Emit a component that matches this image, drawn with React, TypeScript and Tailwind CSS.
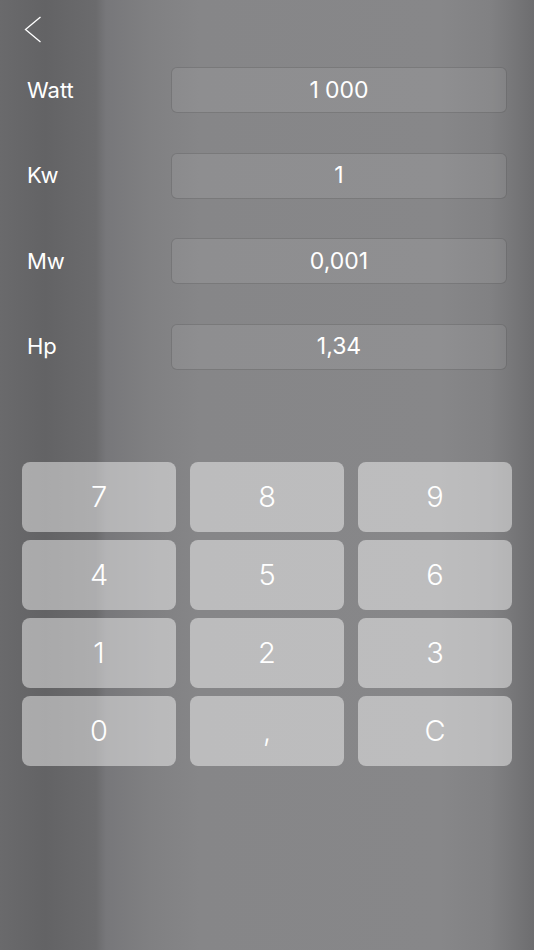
import React from 'react';

const ROWS: { label: string; value: React.ReactNode }[] = [
    { label: 'Watt', value: <>1<span className="ml-[6px]">000</span></> },
    { label: 'Kw', value: '1' },
    { label: 'Mw', value: '0,001' },
    { label: 'Hp', value: '1,34' },
];

const KEYS = ['7', '8', '9', '4', '5', '6', '1', '2', '3', '0', ',', 'C'];

const App: React.FC = () => {
    return (
        <div
            className="w-[534px] h-[950px] overflow-hidden text-white bg-[linear-gradient(90deg,#6a6a6c_0px,#636365_45px,#6b6b6d_96px,#77777a_106px,#808082_150px,#868688_200px,#878789_440px,#818183_490px,#767678_515px,#6d6d6f_534px)]"
            style={{ fontFamily: 'Inter, "Open Sans", sans-serif' }}
        >
            <div className="h-[67px] pl-[24px] pt-[16px]">
                <svg width="18" height="28" viewBox="0 0 18 28" fill="none">
                    <path d="M16.5 1 L1.5 13.5 L16.5 26" stroke="white" strokeWidth="1.3" />
                </svg>
            </div>

            <div className="flex flex-col gap-[39.5px] px-[27px]">
                {ROWS.map(r => (
                    <div key={r.label} className="flex items-center h-[46px]">
                        <div className="w-[144px] text-[22px]">{r.label}</div>
                        <div className="flex-1 h-[46px] flex items-center justify-center rounded-[6px] border border-black/15 bg-white/[0.07] text-[23px]">
                            {r.value}
                        </div>
                    </div>
                ))}
            </div>

            <div className="mt-[92px] px-[22px] grid grid-cols-3 gap-x-[14px] gap-y-[8px]">
                {KEYS.map(k => (
                    <button
                        key={k}
                        className="h-[70px] rounded-[8px] bg-white/45 text-[29px] font-light flex items-center justify-center"
                    >
                        {k}
                    </button>
                ))}
            </div>
        </div>
    );
};

export default App;
